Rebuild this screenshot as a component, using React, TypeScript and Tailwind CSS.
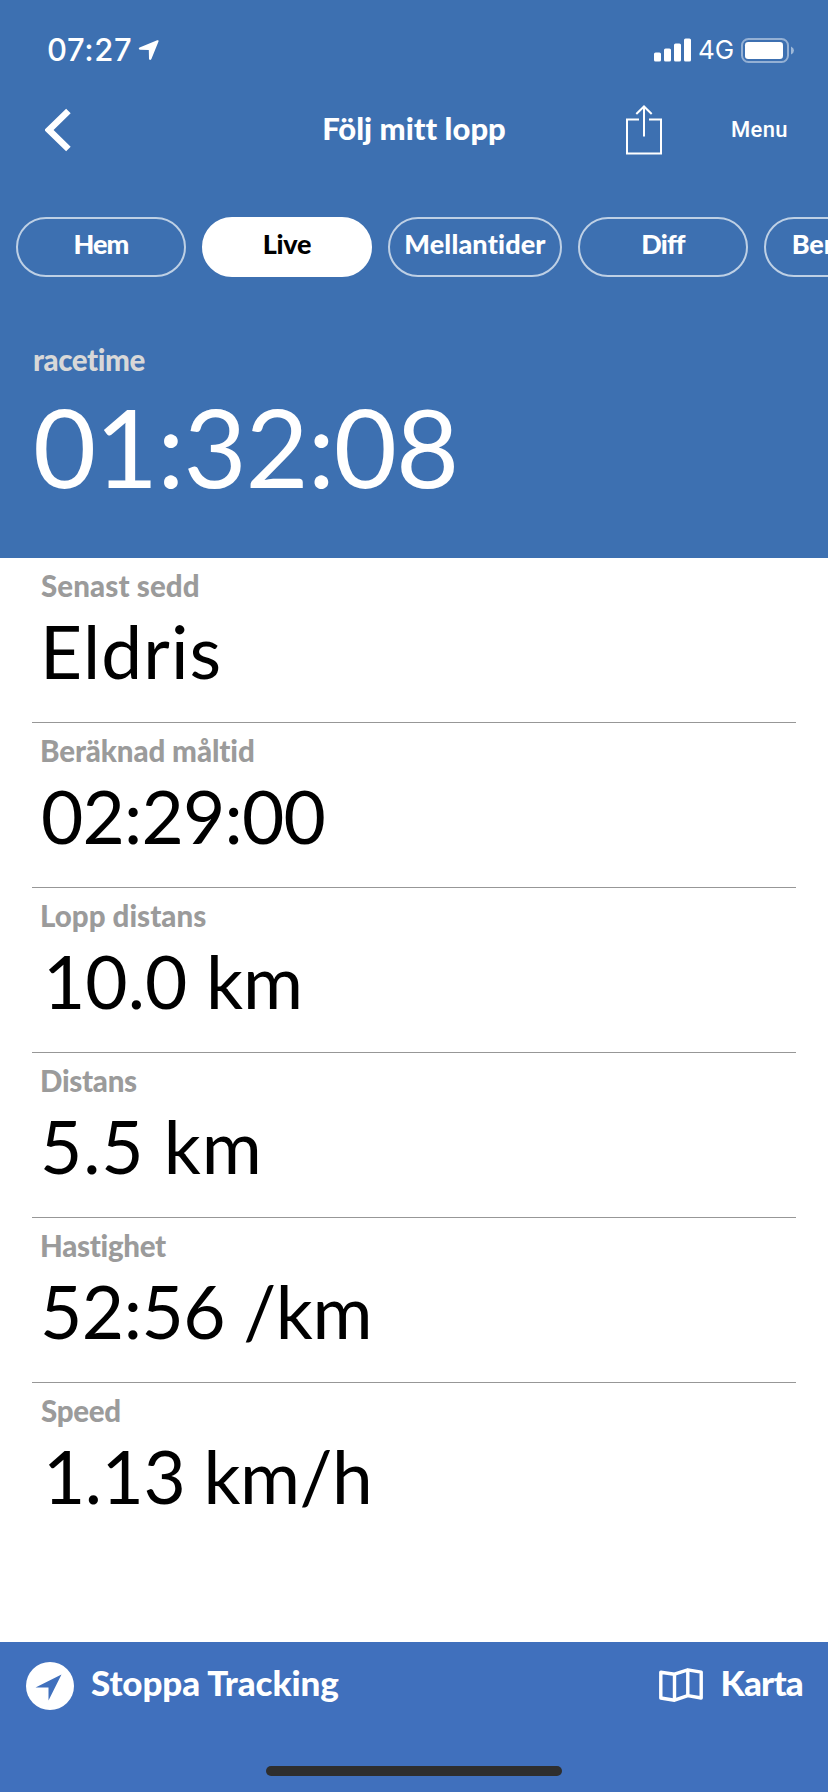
import React from "react";
import clsx from "clsx";

const tabs = [
  { label: "Hem", className: "w-[170px] tracking-[-0.9px]" },
  { label: "Live", className: "w-[170px] tracking-[-0.3px]", active: true },
  { label: "Mellantider", className: "w-[174px] tracking-[0.15px]" },
  { label: "Diff", className: "w-[170px] tracking-[-0.9px]" },
  { label: "Beräknad", className: "w-[170px] tracking-[-0.1px]" },
];

const stats = [
  {
    label: "Senast sedd",
    labelClass: "pl-px tracking-[0.1px]",
    value: "Eldris",
    valueClass: "tracking-[1.1px]",
  },
  {
    label: "Beräknad måltid",
    labelClass: "tracking-[-0.1px]",
    value: "02:29:00",
    valueClass: "pl-px tracking-[-0.8px]",
  },
  {
    label: "Lopp distans",
    labelClass: "tracking-[0.01px]",
    value: "10.0 km",
    valueClass: "pl-[3px]",
  },
  {
    label: "Distans",
    labelClass: "tracking-[-0.3px]",
    value: "5.5 km",
    valueClass: "tracking-[0.8px]",
  },
  {
    label: "Hastighet",
    labelClass: "tracking-[-0.3px]",
    value: "52:56 /km",
    valueClass: "tracking-[-0.5px]",
  },
  {
    label: "Speed",
    labelClass: "pl-px tracking-[-0.3px]",
    value: "1.13 km/h",
    valueClass: "pl-[3px] tracking-[-0.5px]",
  },
];

const StatusBar = () => (
  <div className="flex h-[88px] items-start justify-between pt-[30px] pr-[34px] pl-[47px]">
    <div className="flex h-10 items-center">
      <span className="font-[Inter] text-[31px] leading-10 font-medium tracking-[0.6px]">
        07:27
      </span>
      <svg width="22" height="22" viewBox="0 0 22 22" className="ml-[6px]">
        <path
          d="M1.6 8.4 L19.2 1.3 Q21 .7 20.5 2.5 L13.4 20 Q12 22 11 20 L10.8 11 L1.9 10.8 Q-.2 9.6 1.6 8.4Z"
          fill="white"
        />
      </svg>
    </div>
    <div className="flex h-10 items-center">
      <svg width="37" height="24" viewBox="0 0 37 24" fill="white">
        <rect x="0" y="14.5" width="7" height="9" rx="1.6" />
        <rect x="10" y="10.5" width="7" height="13" rx="1.6" />
        <rect x="20" y="5.5" width="7" height="18" rx="1.6" />
        <rect x="30" y="0.5" width="7" height="23" rx="1.6" />
      </svg>
      <span className="ml-[7px] w-[36px] font-[Inter] text-[26px] leading-10">
        4G
      </span>
      <svg width="53" height="25" viewBox="0 0 53 25" className="ml-[7px]">
        <rect
          x="1"
          y="1"
          width="46"
          height="23"
          rx="6.5"
          fill="none"
          stroke="white"
          strokeOpacity="0.45"
          strokeWidth="2"
        />
        <rect x="4" y="4" width="38" height="17" rx="3.2" fill="white" />
        <path d="M50 8.5 Q53 10 53 12.5 T50 16.5Z" fill="white" fillOpacity="0.5" />
      </svg>
    </div>
  </div>
);

const NavBar = () => (
  <div className="grid h-[84px] grid-cols-[1fr_auto_1fr] items-center">
    <svg width="26" height="44" viewBox="0 0 26 44" className="ml-[45px]">
      <path
        d="M23.4 3 L4 22 L23.4 41"
        fill="none"
        stroke="white"
        strokeWidth="6.5"
      />
    </svg>
    <h1 className="pb-1 text-[31px] leading-10 font-black tracking-[0.01px]">
      Följ mitt lopp
    </h1>
    <div className="flex items-center justify-end pr-[40px]">
      <svg
        width="36"
        height="50"
        viewBox="0 0 36 50"
        fill="none"
        stroke="white"
        strokeWidth="2"
      >
        <path d="M13 14.5 H1 V48.5 H35 V14.5 H23" />
        <path d="M18 31.5 V1.5 M10.3 9 L18 1.5 L25.7 9" />
      </svg>
      <span className="ml-[69px] font-[Roboto] text-[22px] leading-8 font-medium tracking-[0.4px]">
        Menu
      </span>
    </div>
  </div>
);

const App = () => {
  return (
    <div className="flex h-[1792px] w-[828px] flex-col overflow-hidden bg-white font-[Lato,sans-serif] text-white">
      <header className="h-[558px] shrink-0 bg-[#3d70b1]">
        <StatusBar />
        <NavBar />
        <nav className="mt-[45px] flex gap-4 overflow-hidden pl-4">
          {tabs.map((tab) => (
            <button
              key={tab.label}
              className={clsx(
                "h-[60px] shrink-0 rounded-full border-2 pb-[7px] text-[27px] leading-none font-black",
                tab.active
                  ? "border-white bg-white text-black"
                  : "border-[#bed0e5]",
                tab.className
              )}
            >
              {tab.label}
            </button>
          ))}
        </nav>
        <div className="mt-[63px] pl-[33px]">
          <div className="text-[29.5px] leading-10 font-black tracking-[-0.4px] text-[#d8d8d8]">
            racetime
          </div>
          <div className="mt-[11px] text-[109px] leading-[110px] tracking-[-1.1px]">
            01:32:08
          </div>
        </div>
      </header>

      <main className="flex-1 px-8">
        {stats.map((stat) => (
          <div
            key={stat.label}
            className="h-[165px] border-b border-[#979797] px-2 pt-2 last:border-b-0"
          >
            <div
              className={clsx(
                "text-[29.5px] leading-10 font-black text-[#9b9b9b]",
                stat.labelClass
              )}
            >
              {stat.label}
            </div>
            <div
              className={clsx(
                "mt-[5px] text-[73px] leading-[80px] text-black",
                stat.valueClass
              )}
            >
              {stat.value}
            </div>
          </div>
        ))}
      </main>

      <footer className="flex h-[150px] shrink-0 flex-col items-center justify-between bg-[#4070bd] pt-5 pb-4">
        <div className="flex w-full items-center justify-between pr-[25px] pl-[26px] text-[35px] leading-10 font-black">
          <div className="flex items-center">
            <svg width="48" height="48" viewBox="0 0 48 48">
              <circle cx="24" cy="24" r="24" fill="white" />
              <path d="M9.5 25.5 L35.5 12.5 L22.5 38.5 V25.5Z" fill="#4070bd" />
            </svg>
            <span className="ml-[17px] pb-2 tracking-[-0.1px]">
              Stoppa Tracking
            </span>
          </div>
          <div className="flex items-center">
            <svg
              width="44"
              height="34"
              viewBox="0 0 44 34"
              fill="none"
              stroke="white"
              strokeWidth="3.4"
              strokeLinejoin="round"
              className="mb-[2px]"
            >
              <path d="M1.8 4.2 L15.5 6.2 L28.8 1.8 L42.2 4.2 V30 L28.8 27.6 L15.5 32.2 L1.8 30Z" />
              <path d="M15.5 6.2 V32.2 M28.8 1.8 V27.6" />
            </svg>
            <span className="ml-[17px] pb-2 tracking-[-0.8px]">Karta</span>
          </div>
        </div>
        <div className="h-[10px] w-[296px] rounded-full bg-[#2e2e2e]" />
      </footer>
    </div>
  );
};

export default App;
